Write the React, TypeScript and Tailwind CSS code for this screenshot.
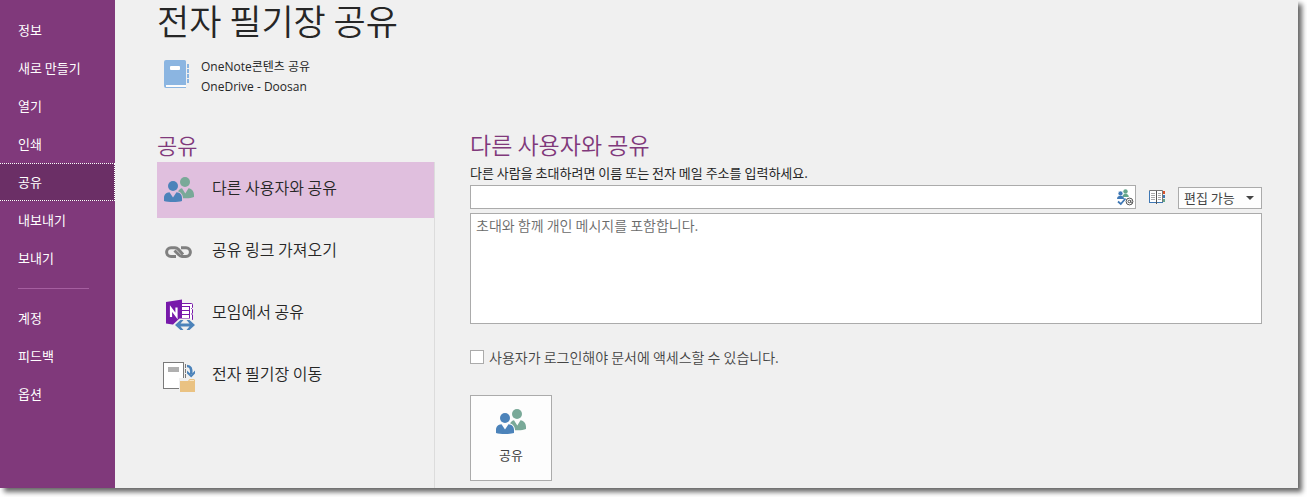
import { useState, type ReactNode } from "react";

const MENU_TOP = ["정보", "새로 만들기", "열기", "인쇄", "공유", "내보내기", "보내기"];
const MENU_BOTTOM = ["계정", "피드백", "옵션"];

function PeopleIcon({ bg }: { bg: string }) {
  return (
    <svg width="30" height="26" viewBox="0 0 30 26" aria-hidden="true">
      <circle cx="21" cy="5" r="5" fill="#79a998" />
      <path
        d="M14 14.5C15 12.5 16.5 11.5 18 11.2L21.3 16.5L24.5 11.2C28 11.8 30 14.5 30 18V20C27 21.4 22 21.6 17 21Z"
        fill="#79a998"
      />
      <circle cx="9" cy="9" r="6.2" fill={bg} />
      <path d="M0 25V19C1 16 3 14 6 14H13C17 15 19 18 19 21V25Z" fill={bg} />
      <circle cx="9" cy="9" r="5" fill="#4c83ba" />
      <path
        d="M0 24V21C0 17.5 2 15.4 5.5 15.2L9 20.5L12.5 15.2C16 15.4 18 17.5 18 21V24C14 25.3 4 25.3 0 24Z"
        fill="#4c83ba"
      />
    </svg>
  );
}

function LinkIcon() {
  return (
    <svg width="30" height="26" viewBox="0 0 30 26" fill="none" stroke="#808080" strokeWidth="3" aria-hidden="true">
      <path d="M12 17.5H7A4.4 4.4 0 0 1 7 8.7H11C13 8.7 14 10 15 11L19 15.5" />
      <path d="M17 8.7H22A4.4 4.4 0 0 1 22 17.5H18C16 17.5 15 16 14 15L10.5 11.5" />
    </svg>
  );
}

function MeetingIcon() {
  return (
    <svg width="32" height="32" viewBox="0 0 32 32" aria-hidden="true">
      <path d="M18 5.5H29.5V22H18Z" fill="#fff" />
      <path d="M19 5.5H28.5Q29.5 5.5 29.5 6.5V9.5L28.5 10.5L29.5 11.5V15L28.5 16L29.5 17V22" fill="none" stroke="#7719aa" />
      <path d="M19 8.5H26M19 12.5H26M19 16.5H26M19 20.5H26" stroke="#7719aa" />
      <path d="M26.5 8V21" stroke="#7719aa" />
      <path d="M3 4L19 1.5V28L3 25.5Z" fill="#7719aa" />
      <path d="M8 19V10.5L13.5 18V9.5" fill="none" stroke="#fff" strokeWidth="2.2" />
      <path d="M10 26.5L16.5 20.5H28L32 24V32H16Z" fill="#f0f0f0" />
      <path
        d="M12 27L17.5 22H20.5L17.5 25.5H26.5L23.5 22H26.5L32 27L26.5 32H23.5L26.5 28.5H17.5L20.5 32H17.5Z"
        fill="#4c83ba"
      />
    </svg>
  );
}

function MoveIcon() {
  return (
    <svg width="32" height="32" viewBox="0 0 32 32" aria-hidden="true">
      <rect x="0.5" y="2.5" width="20" height="26" fill="#fff" stroke="#7a7a7a" />
      <rect x="5" y="7" width="11" height="5" fill="#b0b0b0" />
      <path d="M22.5 4V20" stroke="#7a7a7a" strokeDasharray="4 1" />
      <path d="M24 6C27.5 6 28.6 8.5 28.3 14" fill="none" stroke="#4c83ba" strokeWidth="2.6" />
      <path d="M24 10.5L28.2 14.5L32 10.5V13.5L28.2 17.5L24 13.5Z" fill="#4c83ba" />
      <path d="M16 20V18H25L26 18H32V32H16Z" fill="#f0f0f0" />
      <path d="M17 21H25L26.5 19H31L32 20V32H17Z" fill="#eac282" />
      <path d="M26.5 20.5H31" stroke="#f8e6c4" />
    </svg>
  );
}

function NotebookIcon() {
  return (
    <svg width="25" height="28" viewBox="0 0 25 28" aria-hidden="true">
      <path d="M2 0H20.5Q22 0 22 1.5V25H2V27H22V28H2Q0 28 0 26V2Q0 0 2 0Z" fill="#8bb5e1" />
      <path d="M2 25.3H22V26.8H2Z" fill="#fff" />
      <rect x="6" y="6" width="10" height="4" rx="1" fill="#fff" />
      <path d="M24 4V23" stroke="#8bb5e1" strokeWidth="2" strokeDasharray="4 1" />
    </svg>
  );
}

function CheckNamesIcon() {
  return (
    <svg width="17" height="17" viewBox="0 0 17 17" aria-hidden="true">
      <circle cx="8.5" cy="2.5" r="2.2" fill="#65a58b" />
      <path d="M5.5 8C5.5 5.5 7 5 8.5 5S11.8 5.5 11.8 8Z" fill="#65a58b" />
      <circle cx="3.5" cy="4.5" r="2.4" fill="#3f78b5" stroke="#fff" strokeWidth="0.5" />
      <path d="M0 10C0 7.5 1.5 7 3.5 7S7 7.5 7 10Z" fill="#3f78b5" />
      <path d="M1 12.5L3.8 15L8.5 9.5" fill="none" stroke="#3f78b5" strokeWidth="1.8" />
      <circle cx="12.5" cy="12.5" r="3.4" fill="#fff" stroke="#555" />
      <circle cx="12.3" cy="12.5" r="1.3" fill="none" stroke="#555" />
      <path d="M13.8 11V13.5Q14.8 14.4 15.6 13" fill="none" stroke="#555" />
    </svg>
  );
}

function AddressBookIcon() {
  return (
    <svg width="16" height="14" viewBox="0 0 16 14" aria-hidden="true">
      <path d="M0.5 0.5H13.5V12.5H0.5Z" fill="#fff" stroke="#777" />
      <path d="M0 12.5H14" stroke="#3f78b5" />
      <path d="M0.5 1V13" stroke="#3f78b5" />
      <path d="M7.5 1V14" stroke="#555" />
      <path d="M2 3.5H6M2 5.5H6M2 7.5H6M2 9.5H6M9 3.5H12M9 5.5H12M9 7.5H12M9 9.5H12" stroke="#aaa" />
      <path d="M14 1H16V4H14Z" fill="#d9532c" />
      <path d="M14 5H16V8H14Z" fill="#3f78b5" />
      <path d="M14 9H16V12H14Z" fill="#65a58b" />
    </svg>
  );
}

function MenuItem({ label, active, onClick }: { label: string; active: boolean; onClick: () => void }) {
  return (
    <button
      onClick={onClick}
      className={
        active
          ? "block h-[38px] w-full border border-l-0 border-dotted border-white bg-[#6b2f66] px-[18px] text-left outline-none"
          : "block h-[38px] w-full px-[18px] text-left hover:bg-[#6b2f66]"
      }
    >
      {label}
    </button>
  );
}

export default function App() {
  const [page, setPage] = useState("공유");
  const [option, setOption] = useState(0);

  const options: { label: string; icon: ReactNode }[] = [
    { label: "다른 사용자와 공유", icon: <PeopleIcon bg={option === 0 ? "#e0bfde" : "#f0f0f0"} /> },
    { label: "공유 링크 가져오기", icon: <LinkIcon /> },
    { label: "모임에서 공유", icon: <MeetingIcon /> },
    { label: "전자 필기장 이동", icon: <MoveIcon /> },
  ];

  return (
    <div className="flex min-h-screen bg-white pr-[9px] pb-[9px] font-['Open_Sans','Noto_Sans_CJK_KR',sans-serif] text-[13px] text-[#262626]">
      <div className="flex flex-1 bg-[#f0f0f0] shadow-[4px_4px_5px_rgba(0,0,0,0.6)]">
        <nav className="w-[115px] shrink-0 bg-[#80397b] pt-[11px] font-['Noto_Sans_CJK_KR',sans-serif] text-white">
          {MENU_TOP.map((m) => (
            <MenuItem key={m} label={m} active={m === page} onClick={() => setPage(m)} />
          ))}
          <hr className="mx-[18px] mt-[11px] mb-2.5 w-[71px] border-[#a55fa0]" />
          {MENU_BOTTOM.map((m) => (
            <MenuItem key={m} label={m} active={m === page} onClick={() => setPage(m)} />
          ))}
        </nav>

        <main className="flex flex-1 flex-col pr-9 pl-[42px]">
          <h1 className="font-['Noto_Sans_CJK_KR',sans-serif] text-[35px] leading-10 font-[350]">전자 필기장 공유</h1>
          <div className="mt-4 flex items-start pl-[7px]">
            <div className="pt-1">
              <NotebookIcon />
            </div>
            <div className="pt-px pl-3 text-xs leading-5">
              <p>OneNote콘텐츠 공유</p>
              <p>OneDrive - Doosan</p>
            </div>
          </div>

          <div className="mt-[33px] flex flex-1 font-['Noto_Sans_CJK_KR',sans-serif]">
            <section className="flex w-[278px] shrink-0 flex-col">
              <h2 className="pb-1 text-[22px] leading-7 font-[350] text-[#80397b]">공유</h2>
              <div className="flex flex-1 flex-col gap-1.5 border-r border-[#dcdcdc]">
                {options.map((o, i) => (
                  <button
                    key={o.label}
                    onClick={() => setOption(i)}
                    className={
                      i === option
                        ? "flex h-14 items-center gap-[17px] bg-[#e0bfde] pl-1.5 text-left text-base font-[350]"
                        : "flex h-14 items-center gap-[17px] pl-1.5 text-left text-base font-[350] hover:bg-[#ead5e9]"
                    }
                  >
                    <span className="flex w-8 shrink-0 justify-center">{o.icon}</span>
                    <span className="pb-1.5">{o.label}</span>
                  </button>
                ))}
              </div>
            </section>

            <section className="flex-1 pl-[35px]">
              <h2 className="pb-1 text-[23px] leading-7 font-[350] text-[#80397b]">다른 사용자와 공유</h2>
              <label htmlFor="invitees" className="block h-[23px] leading-[22px]">
                다른 사람을 초대하려면 이름 또는 전자 메일 주소를 입력하세요.
              </label>
              <div className="flex items-center">
                <div className="relative flex-1">
                  <input
                    id="invitees"
                    type="text"
                    className="block h-6 w-full border border-[#ababab] bg-white pr-6 pl-1.5 outline-none"
                  />
                  <button aria-label="이름 확인" className="absolute top-1 right-0.5">
                    <CheckNamesIcon />
                  </button>
                </div>
                <button aria-label="주소록" className="px-[13px]">
                  <AddressBookIcon />
                </button>
                <div className="relative self-end">
                  <select
                    aria-label="권한"
                    className="block h-[22px] w-[84px] appearance-none border border-[#ababab] bg-[#fdfdfd] pl-[5px] leading-5 text-[#444] outline-none"
                  >
                    <option>편집 가능</option>
                    <option>보기 가능</option>
                  </select>
                  <svg
                    width="8"
                    height="4"
                    viewBox="0 0 8 4"
                    className="pointer-events-none absolute top-[9px] right-2"
                    aria-hidden="true"
                  >
                    <path d="M0 0H8L4 4Z" fill="#444" />
                  </svg>
                </div>
              </div>
              <textarea
                aria-label="메시지"
                placeholder="초대와 함께 개인 메시지를 포함합니다."
                className="mt-1 block h-[111px] w-full resize-none border border-[#ababab] bg-white px-[5px] py-px text-sm font-[350] outline-none placeholder:text-[#6a6a6a]"
              />
              <label className="mt-6 flex items-center gap-[5px] text-sm leading-[18px] font-[350] text-[#444]">
                <input type="checkbox" className="size-3.5 appearance-none border border-[#ababab] bg-white checked:bg-[#80397b]" />
                사용자가 로그인해야 문서에 액세스할 수 있습니다.
              </label>
              <button className="mt-[29px] flex h-[86px] w-[82px] flex-col items-center border border-[#ababab] bg-[#fdfdfd] pt-[13px] text-[#444]">
                <PeopleIcon bg="#fdfdfd" />
                <span className="pt-2.5 leading-5">공유</span>
              </button>
            </section>
          </div>
        </main>
      </div>
    </div>
  );
}
